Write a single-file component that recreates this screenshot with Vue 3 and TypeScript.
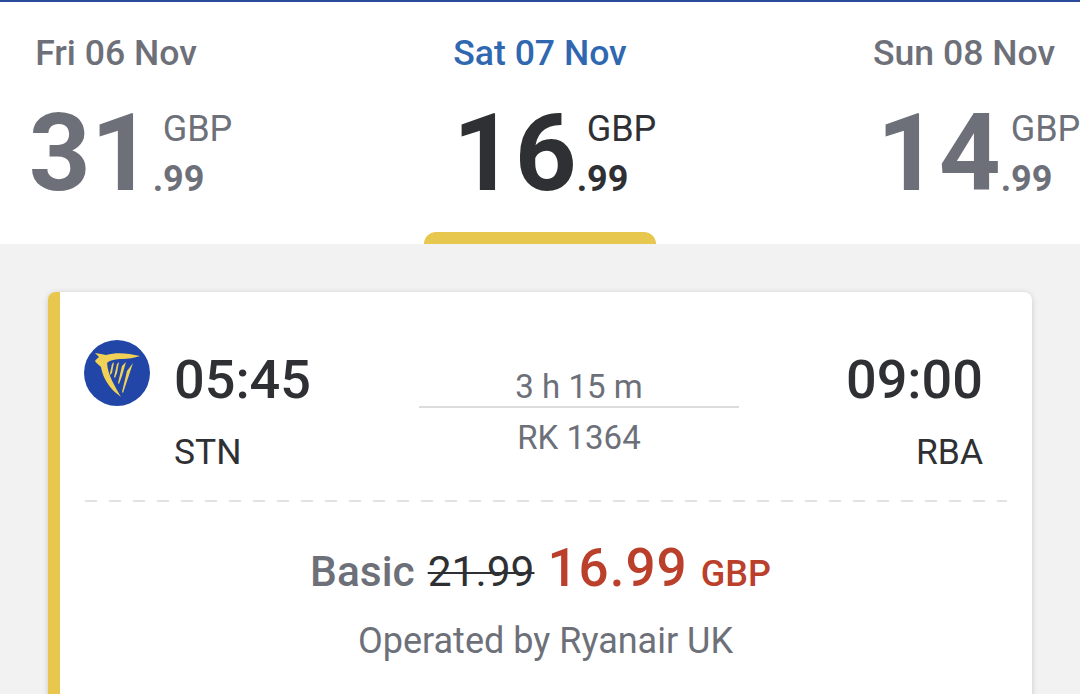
<template>
  <div class="page">
    <div class="dates">
      <div v-for="day in days" :key="day.date" class="day" :class="{ active: day.active }">
        <div class="dayName">{{ day.date }}</div>
        <div class="price">
          <span class="whole">{{ day.whole }}</span>
          <div class="side">
            <span class="cur">GBP</span>
            <span class="cents">.99</span>
          </div>
        </div>
        <div v-if="day.active" class="tab"></div>
      </div>
    </div>
    <div class="content">
      <div class="card">
        <div class="flight">
          <svg class="logo" viewBox="0 0 66 66">
            <circle cx="33" cy="33" r="33" fill="#2146a8" />
            <path
              d="M11 13 L17 14 C19 14 20 15 22 15 C32 12 44 13 56 16 C50 18 44 19 38 19 C32 19 26 20 23 23 C24 36 31 46 37 57 C34 54 30 52 27 48 C21 41 18 33 17 27 C15 25 12 23 11 21 C12 19 14 18 15 17 Z"
              fill="#f1d257"
            />
            <path
              d="M26 33 L28 24 L30 22 L28 33 L26 35 Z M30 37 L33 24 L35 22 L33 33 L31 38 Z M34 43 L38 26 L42 22 L38 36 L35 44 Z M38 52 L43 31 L49 23 L44 38 L39 53 Z"
              fill="#f1d257"
            />
          </svg>
          <div class="point">
            <div class="time">05:45</div>
            <div class="code">STN</div>
          </div>
          <div class="middle">
            <div class="duration">3 h 15 m</div>
            <div class="flightNo">RK 1364</div>
          </div>
          <div class="point right">
            <div class="time">09:00</div>
            <div class="code">RBA</div>
          </div>
        </div>
        <div class="dash"></div>
        <div class="fare">
          <span class="fareName">Basic</span>
          <span class="old">21.99</span>
          <span class="now">16.99</span>
          <span class="nowCur">GBP</span>
        </div>
        <div class="operated">Operated by Ryanair UK</div>
      </div>
    </div>
  </div>
</template>

<script setup lang="ts">
interface Day {
  date: string;
  whole: string;
  active?: boolean;
}
const days: Day[] = [
  { date: 'Fri 06 Nov', whole: '31' },
  { date: 'Sat 07 Nov', whole: '16', active: true },
  { date: 'Sun 08 Nov', whole: '14' }
];
</script>

<style>
html,
body {
  margin: 0;
  background: #f2f2f2;
  overflow: hidden;
}
</style>

<style scoped>
.page {
  height: 694px;
  overflow: hidden;
  font-family: Roboto, sans-serif;
  background: #f2f2f2;
  color: #2f3033;
}
.dates {
  display: grid;
  grid-template-columns: repeat(3, 424px);
  justify-content: center;
  height: 242px;
  background: #fff;
  border-top: 2px solid #2a4a9c;
}
.day {
  position: relative;
  display: flex;
  flex-direction: column;
  align-items: center;
  color: #6d7079;
}
.dayName {
  margin-top: 30px;
  font-size: 35.6px;
  line-height: 42px;
  font-weight: 500;
}
.active .dayName {
  color: #2f68b0;
}
.active .price {
  color: #2f3033;
}
.price {
  display: flex;
  margin-top: 23px;
  margin-left: 29px;
}
.whole {
  font-size: 108px;
  line-height: 112px;
  font-weight: 700;
}
.side {
  display: flex;
  flex-direction: column;
  margin-left: 0;
  padding-top: 7px;
}
.cur {
  margin-left: 10px;
  font-size: 36px;
  line-height: 50px;
}
.cents {
  margin-top: 5px;
  font-size: 36px;
  line-height: 40px;
  font-weight: 700;
}
.tab {
  position: absolute;
  left: 96px;
  bottom: 0;
  width: 232px;
  height: 12px;
  background: #e8c74f;
  border-radius: 12px 12px 0 0;
}
.content {
  padding: 48px 48px 0;
}
.card {
  height: 480px;
  background: #fff;
  border-left: 12px solid #e8c74f;
  border-radius: 8px;
  box-shadow: 0 1px 6px rgba(0, 0, 0, 0.16);
  padding: 0 25px 0 24px;
}
.flight {
  display: flex;
  align-items: flex-start;
  padding-top: 48px;
  height: 208px;
  box-sizing: border-box;
}
.logo {
  width: 66px;
  height: 66px;
  margin-right: 24px;
}
.point {
  display: flex;
  flex-direction: column;
  width: 200px;
  margin-top: 10px;
}
.point.right {
  align-items: flex-end;
  margin-left: auto;
  margin-right: 24px;
}
.time {
  font-size: 54px;
  line-height: 60px;
  font-weight: 500;
}
.code {
  margin-top: 22px;
  font-size: 35.4px;
  line-height: 40px;
}
.middle {
  display: flex;
  flex-direction: column;
  align-items: center;
  width: 320px;
  margin-left: 45px;
  margin-top: 27px;
  color: #6d7079;
  font-size: 33px;
}
.duration {
  width: 100%;
  text-align: center;
  line-height: 39px;
  border-bottom: 2px solid #dcdcdc;
}
.flightNo {
  line-height: 40px;
  margin-top: 10px;
}
.dash {
  height: 2px;
  margin-left: 1px;
  background: repeating-linear-gradient(to right, #e2e2e2 0 12px, transparent 12px 24px);
}
.fare {
  display: flex;
  justify-content: center;
  align-items: baseline;
  margin-top: 35px;
  margin-left: -10px;
  gap: 13px;
}
.fareName {
  font-size: 42.5px;
  font-weight: 500;
  color: #6d7079;
}
.old {
  font-size: 42.5px;
  text-decoration: line-through;
  text-decoration-thickness: 2px;
}
.now {
  font-size: 53px;
  font-weight: 500;
  color: #bb402c;
  letter-spacing: 1px;
}
.nowCur {
  font-size: 36px;
  font-weight: 500;
  color: #bb402c;
}
.operated {
  margin-top: 21px;
  text-align: center;
  font-size: 36px;
  color: #6d7079;
}
</style>
